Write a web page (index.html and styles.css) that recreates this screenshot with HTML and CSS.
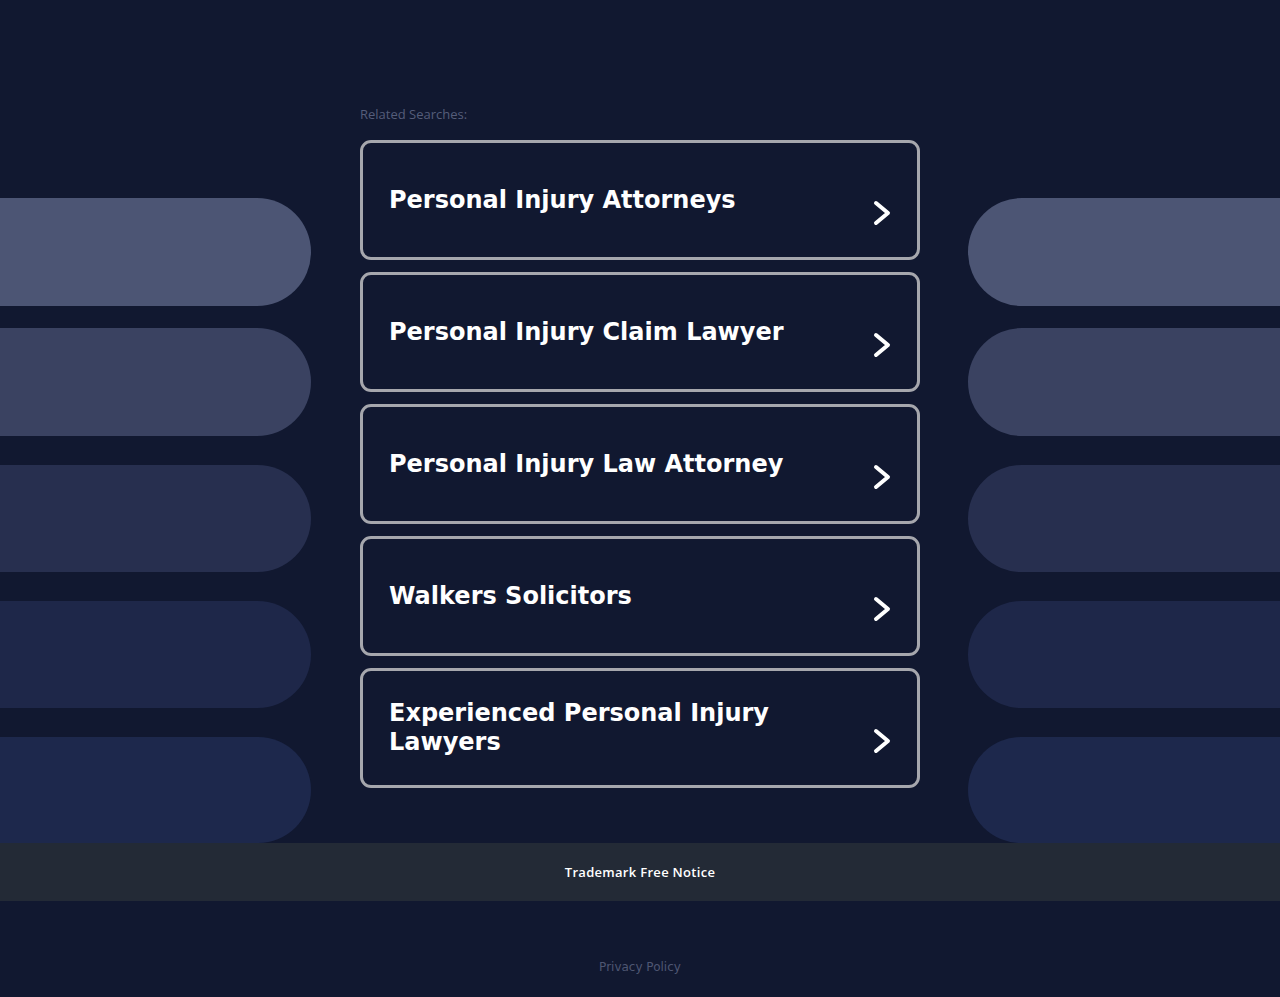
FILE: index.html
```html
<!DOCTYPE html>
<html>

<head>
    <title>Related Searches</title>
    <link rel="stylesheet" href="styles.css">
</head>

<body>
    <div class="page">
        <div class="side side-left">
            <div class="pill pill-1"></div>
            <div class="pill pill-2"></div>
            <div class="pill pill-3"></div>
            <div class="pill pill-4"></div>
            <div class="pill pill-5"></div>
        </div>

        <div class="main">
            <p class="label">Related Searches:</p>
            <ul class="links">
                <li><a href="#"><span>Personal Injury Attorneys</span>
                    <svg class="chev" viewBox="0 0 20 28"><polyline points="4,4 16,14 4,24"/></svg></a></li>
                <li><a href="#"><span>Personal Injury Claim Lawyer</span>
                    <svg class="chev" viewBox="0 0 20 28"><polyline points="4,4 16,14 4,24"/></svg></a></li>
                <li><a href="#"><span>Personal Injury Law Attorney</span>
                    <svg class="chev" viewBox="0 0 20 28"><polyline points="4,4 16,14 4,24"/></svg></a></li>
                <li><a href="#"><span>Walkers Solicitors</span>
                    <svg class="chev" viewBox="0 0 20 28"><polyline points="4,4 16,14 4,24"/></svg></a></li>
                <li><a href="#"><span>Experienced Personal Injury Lawyers</span>
                    <svg class="chev" viewBox="0 0 20 28"><polyline points="4,4 16,14 4,24"/></svg></a></li>
            </ul>
        </div>

        <div class="side side-right">
            <div class="pill pill-1"></div>
            <div class="pill pill-2"></div>
            <div class="pill pill-3"></div>
            <div class="pill pill-4"></div>
            <div class="pill pill-5"></div>
        </div>
    </div>

    <div class="notice">Trademark Free Notice</div>

    <div class="bottom">
        <a href="#">Privacy Policy</a>
    </div>
</body>

</html>
```

FILE: styles.css
```css
body {
    margin: 0;
    background: #111830;
    font-family: "DejaVu Sans", sans-serif;
}

.page {
    display: grid;
    grid-template-columns: 311px 560px 1fr;
    column-gap: 49px;
    height: 843px;
}

.side {
    padding-top: 198px;
    display: flex;
    flex-direction: column;
}

.side-right {
    margin-left: -1px;
}

.pill {
    height: 108px;
}

.pill-2 { margin-top: 22px; }
.pill-3 { margin-top: 29px; height: 107px; }
.pill-4 { margin-top: 29px; height: 107px; }
.pill-5 { margin-top: 29px; height: 106px; }

.side-left .pill { border-radius: 0 54px 54px 0; }
.side-right .pill { border-radius: 54px 0 0 54px; }

.pill-1 { background: #4c5574; }
.pill-2 { background: #3a4261; }
.pill-3 { background: #272f4f; }
.pill-4 { background: #1e2749; }
.pill-5 { background: #1d284c; }

.main {
    padding-top: 106px;
}

.label {
    margin: 0 0 18px;
    font-family: "Open Sans", sans-serif;
    font-size: 13px;
    line-height: 16px;
    color: #555d7a;
}

.links {
    list-style: none;
    margin: 0;
    padding: 0;
}

.links li {
    margin-bottom: 12px;
}

.links a {
    display: flex;
    align-items: center;
    justify-content: space-between;
    height: 120px;
    box-sizing: border-box;
    padding: 0 25px 0 26px;
    border: 3px solid #a6a7ad;
    border-radius: 11px;
    color: #fff;
    text-decoration: none;
    font-size: 24px;
    font-weight: bold;
    line-height: 29px;
}

.links a span {
    max-width: 440px;
}

.chev {
    width: 20px;
    height: 28px;
    margin-top: 26px;
    flex-shrink: 0;
}

.chev polyline {
    fill: none;
    stroke: #fff;
    stroke-width: 4;
    stroke-linecap: round;
    stroke-linejoin: round;
}

.notice {
    height: 58px;
    line-height: 58px;
    background: #232a36;
    text-align: center;
    color: #fff;
    font-family: "Open Sans", sans-serif;
    font-size: 13px;
    font-weight: 600;
    letter-spacing: 0.3px;
}

.bottom {
    padding-top: 55px;
    text-align: center;
}

.bottom a {
    font-size: 12px;
    color: #4e5672;
    text-decoration: none;
}
```
